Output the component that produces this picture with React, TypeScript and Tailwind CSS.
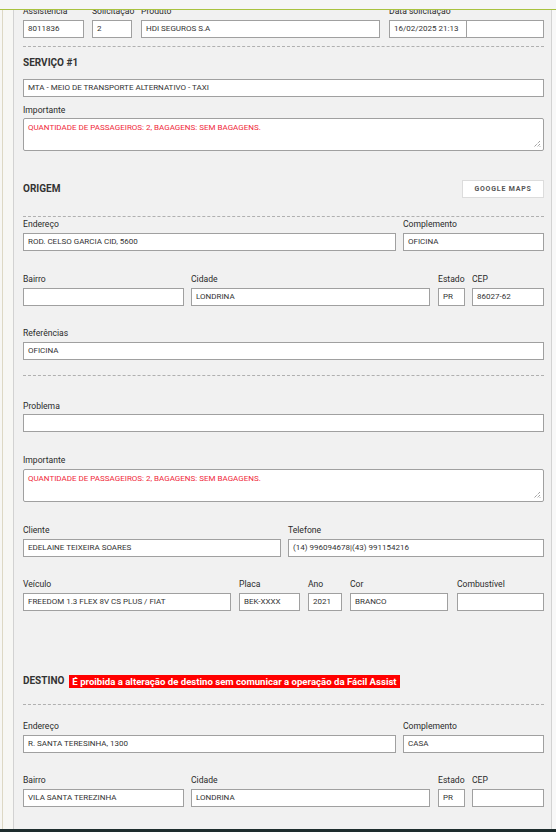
import React from "react";

const FONT = "font-['Roboto','Liberation_Sans',Arial,sans-serif]";

function Label({ children }: { children?: React.ReactNode }) {
  return <div className="h-[11px] text-[8.6px] leading-[11px] text-[#2a2a2a] whitespace-nowrap">{children}</div>;
}

function Box({ value, className = "" }: { value?: string; className?: string }) {
  return (
    <div className={`h-[18px] border border-[#a0a0a0] bg-white px-[4px] text-[8px] leading-[16px] text-[#333] whitespace-nowrap overflow-hidden ${className}`}>
      {value}
    </div>
  );
}

function Field({ label, value, className = "" }: { label?: string; value?: string; className?: string }) {
  return (
    <div className={`flex flex-col ${className}`}>
      <Label>{label}</Label>
      <div className="mt-[3px]">
        <Box value={value} />
      </div>
    </div>
  );
}

function Grip() {
  return (
    <svg className="absolute right-[2px] bottom-[2px]" width="8" height="8" viewBox="0 0 8 8">
      <path d="M7 1 L1 7 M7 4 L4 7 M7 6.5 L6.5 7" stroke="#777" strokeWidth="1" strokeDasharray="1 1" />
    </svg>
  );
}

function TextArea({ value }: { value: string }) {
  return (
    <div className="relative h-[33px] rounded-[2px] border border-[#a0a0a0] bg-white px-[4px] pt-[3px] text-[8px] leading-[11px] text-[#f0283a] whitespace-nowrap">
      {value}
      <Grip />
    </div>
  );
}

function Dashed({ className = "" }: { className?: string }) {
  return <div className={`border-t border-dashed border-[#b0b0b0] ${className}`} />;
}

function Heading({ children }: { children: React.ReactNode }) {
  return <div className="text-[10px] font-bold leading-[14px] text-[#333]">{children}</div>;
}

export default function App() {
  const imp = "QUANTIDADE DE PASSAGEIROS: 2, BAGAGENS: SEM BAGAGENS.";
  return (
    <div className={`relative flex h-[832px] w-[556px] overflow-hidden bg-[#f7f7f4] ${FONT}`}>
      {/* left strip */}
      <div className="flex w-[13px] shrink-0">
        <div className="ml-[2px] w-px bg-[#ddd8c4]" />
      </div>

      {/* panel */}
      <div className="w-[539px] shrink-0 border-l border-r border-[#d2d2d2] bg-[#f1f1f1] pl-[9px] pr-[7px] pt-[6px]">
        {/* row 1 */}
        <div className="flex">
          <Field label="Assistencia" value="8011836" className="w-[61px]" />
          <Field label="Solicitaçao" value="2" className="ml-[8px] w-[40px]" />
          <Field label="Produto" value="HDI SEGUROS S.A" className="ml-[9px] flex-1" />
          <div className="ml-[9px] flex flex-col">
            <Label>Data solicitaçao</Label>
            <div className="mt-[3px] flex">
              <Box value="16/02/2025 21:13" className="w-[78px]" />
              <Box value="" className="-ml-px w-[78px]" />
            </div>
          </div>
        </div>

        <Dashed className="mt-[8px]" />

        <div className="mt-[9px]">
          <Heading>SERVIÇO #1</Heading>
        </div>
        <div className="mt-[9px]">
          <Box value="MTA - MEIO DE TRANSPORTE ALTERNATIVO - TAXI" />
        </div>

        <div className="mt-[8px]">
          <Label>Importante</Label>
          <div className="mt-[2px]">
            <TextArea value={imp} />
          </div>
        </div>

        {/* ORIGEM */}
        <div className="mt-[29px] flex h-[18px] items-center justify-between">
          <Heading>ORIGEM</Heading>
          <div className="flex h-[18px] w-[82px] items-center justify-center border border-[#dcdcdc] bg-white text-[7px] font-bold tracking-[0.8px] text-[#555]">
            GOOGLE MAPS
          </div>
        </div>

        <Dashed className="mt-[18px]" />

        <div className="mt-[2px] flex">
          <Field label="Endereço" value="ROD. CELSO GARCIA CID, 5600" className="w-[373px]" />
          <Field label="Complemento" value="OFICINA" className="ml-[7px] flex-1" />
        </div>

        <div className="mt-[23px] flex">
          <Field label="Bairro" value="" className="w-[161px]" />
          <Field label="Cidade" value="LONDRINA" className="ml-[7px] w-[239px]" />
          <Field label="Estado" value="PR" className="ml-[8px] w-[27px]" />
          <Field label="CEP" value="86027-62" className="ml-[7px] flex-1" />
        </div>

        <div className="mt-[22px]">
          <Field label="Referências" value="OFICINA" />
        </div>

        <Dashed className="mt-[15px]" />

        <div className="mt-[25px]">
          <Label>Problema</Label>
          <div className="mt-[2px]">
            <Box value="" />
          </div>
        </div>

        <div className="mt-[23px]">
          <Label>Importante</Label>
          <div className="mt-[3px]">
            <TextArea value={imp} />
          </div>
        </div>

        <div className="mt-[23px] flex">
          <Field label="Cliente" value="EDELAINE TEIXEIRA SOARES" className="w-[258px]" />
          <Field label="Telefone" value="(14) 996094678|(43) 991154216" className="ml-[7px] flex-1" />
        </div>

        <div className="mt-[22px] flex">
          <Field label="Veículo" value="FREEDOM 1.3 FLEX 8V CS PLUS / FIAT" className="w-[208px]" />
          <Field label="Placa" value="BEK-XXXX" className="ml-[8px] w-[61px]" />
          <Field label="Ano" value="2021" className="ml-[8px] w-[34px]" />
          <Field label="Cor" value="BRANCO" className="ml-[8px] w-[98px]" />
          <Field label="Combustível" value="" className="ml-[9px] flex-1" />
        </div>

        {/* DESTINO */}
        <div className="mt-[63px] flex items-center">
          <Heading>DESTINO</Heading>
          <span className="ml-[5px] bg-[#ff0000] px-[3px] text-[9.6px] font-bold leading-[13px] text-white whitespace-nowrap">
            É proibida a alteração de destino sem comunicar a operação da Fácil Assist
          </span>
        </div>

        <Dashed className="mt-[16px]" />

        <div className="mt-[16px] flex">
          <Field label="Endereço" value="R. SANTA TERESINHA, 1300" className="w-[373px]" />
          <Field label="Complemento" value="CASA" className="ml-[7px] flex-1" />
        </div>

        <div className="mt-[22px] flex">
          <Field label="Bairro" value="VILA SANTA TEREZINHA" className="w-[161px]" />
          <Field label="Cidade" value="LONDRINA" className="ml-[7px] w-[239px]" />
          <Field label="Estado" value="PR" className="ml-[8px] w-[27px]" />
          <Field label="CEP" value="" className="ml-[7px] flex-1" />
        </div>
      </div>

      {/* right strip */}
      <div className="w-[4px] shrink-0 bg-[#f8f8f8]" />

      {/* fixed top header */}
      <div className="absolute left-0 right-0 top-0 h-[10px] border-b border-[#a9c23f] bg-[#f5f5f5]" />
      {/* bottom bar */}
      <div className="absolute bottom-0 left-0 right-0 h-[3px] bg-[#1e2d2e]" />
    </div>
  );
}
